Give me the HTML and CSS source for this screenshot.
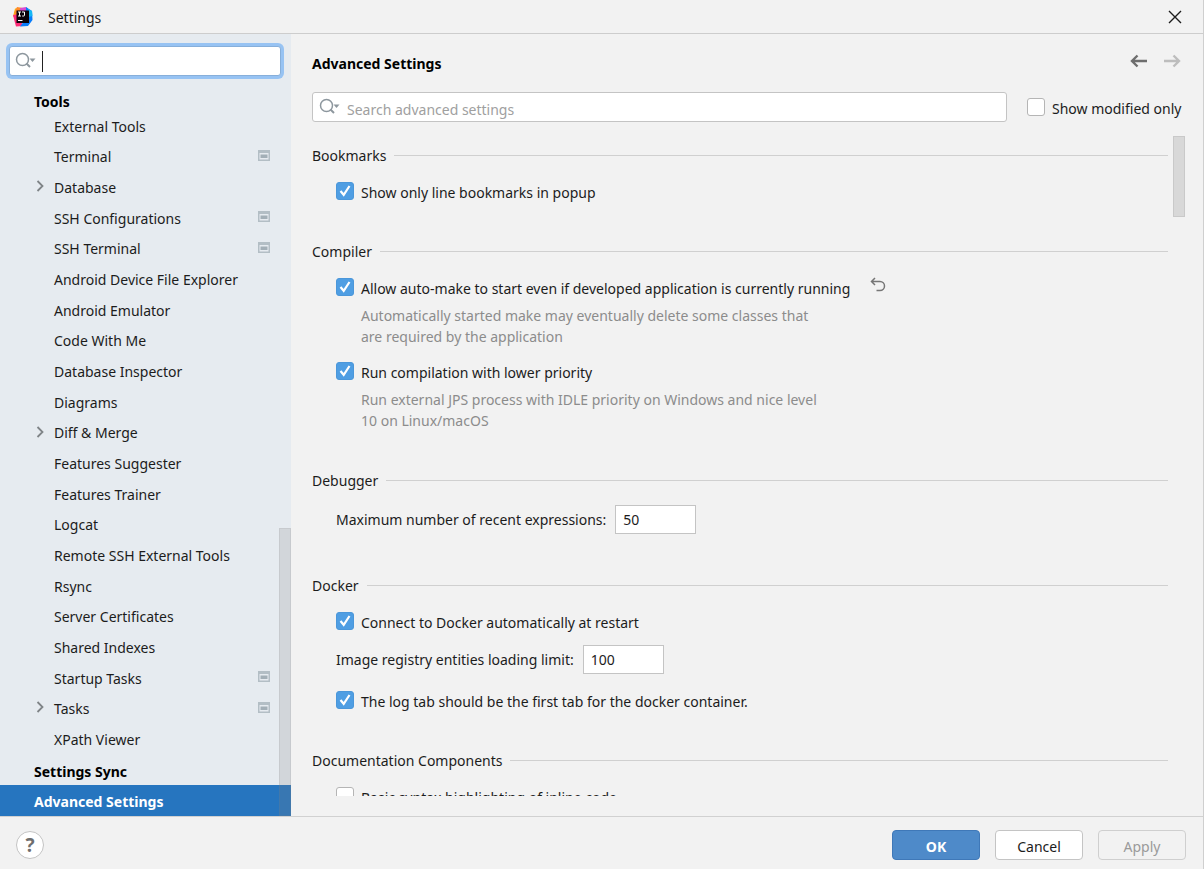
FILE: index.html
```html
<!DOCTYPE html>
<html lang="en">
<head>
<meta charset="utf-8">
<title>Settings</title>
<link rel="stylesheet" href="styles.css">
</head>
<body>
<svg class="defs" aria-hidden="true">
  <symbol id="i-search" viewBox="0 0 22 18">
    <circle cx="7.500" cy="7.500" r="6" fill="none" stroke="#8d979e" stroke-width="1.500"/>
    <path d="M11.500 11.500L15 15" fill="none" stroke="#8d979e" stroke-width="2"/>
    <path d="M14.500 6.500h6L17.500 10z" fill="#8d979e"/>
  </symbol>
  <symbol id="i-project" viewBox="0 0 12 11">
    <path d="M0 0h12v11H0zM1.500 3v6.500h9V3z" fill="#b3bec5" fill-rule="evenodd"/>
    <path d="M2.500 4.500h7v3.500h-7z" fill="#a3afb7"/>
  </symbol>
  <symbol id="i-chevron" viewBox="0 0 8 12">
    <path d="M1.500 1L6.500 6l-5 5" fill="none" stroke="#7f8487" stroke-width="1.800"/>
  </symbol>
</svg>

<header class="titlebar">
  <svg class="logo" viewBox="0 0 20 20" aria-hidden="true">
    <path d="M2 1.500L9 1 5 11 0 9.500z" fill="#fdb60d"/>
    <path d="M4 0l6 1-3 8-6-3z" fill="#ff8a2a"/>
    <path d="M0 8l5-1 5 12-7 .5L1.500 14z" fill="#fe2d78"/>
    <path d="M7 1l6-1 4 4-4 5-6-2z" fill="#d94bd0"/>
    <path d="M13 0l6 4 .5 9-4.500 6-8 .5 6-8z" fill="#087cfa"/>
    <path d="M15 2l4 2 .5 5-4 1z" fill="#14b8f5"/>
    <path d="M3.500 3.500h12.500v12.500H3.500z" fill="#0b0309"/>
    <path d="M5 5h3M6.500 5v4M5 9h3M9 5h2.500v3.200q0 .8-.8.800H9.200M5 13.500h4.500" fill="none" stroke="#fff" stroke-width="1"/>
  </svg>
  <span class="window-title">Settings</span>
  <button class="icon-btn" type="button" aria-label="Close">
    <svg width="14" height="14" viewBox="0 0 14 14"><path d="M1 1l12 12M13 1L1 13" stroke="#1c1c1c" stroke-width="1.400"/></svg>
  </button>
</header>

<div class="body">
  <aside class="sidebar">
    <div class="search focused">
      <svg class="search-icon" aria-hidden="true"><use href="#i-search"/></svg>
      <span class="caret"></span>
      <input type="text" aria-label="Search settings">
    </div>
    <div class="group">Tools</div>
    <ul class="tree">
      <li>External Tools</li>
      <li>Terminal<svg class="project"><use href="#i-project"/></svg></li>
      <li><svg class="chevron"><use href="#i-chevron"/></svg>Database</li>
      <li>SSH Configurations<svg class="project"><use href="#i-project"/></svg></li>
      <li>SSH Terminal<svg class="project"><use href="#i-project"/></svg></li>
      <li>Android Device File Explorer</li>
      <li>Android Emulator</li>
      <li>Code With Me</li>
      <li>Database Inspector</li>
      <li>Diagrams</li>
      <li><svg class="chevron"><use href="#i-chevron"/></svg>Diff &amp; Merge</li>
      <li>Features Suggester</li>
      <li>Features Trainer</li>
      <li>Logcat</li>
      <li>Remote SSH External Tools</li>
      <li>Rsync</li>
      <li>Server Certificates</li>
      <li>Shared Indexes</li>
      <li>Startup Tasks<svg class="project"><use href="#i-project"/></svg></li>
      <li><svg class="chevron"><use href="#i-chevron"/></svg>Tasks<svg class="project"><use href="#i-project"/></svg></li>
      <li>XPath Viewer</li>
      <li class="top">Settings Sync</li>
      <li class="top selected">Advanced Settings</li>
    </ul>
    <div class="thumb tree-thumb"></div>
  </aside>

  <main class="content">
    <div class="page-head">
      <h1>Advanced Settings</h1>
      <button class="icon-btn" type="button" aria-label="Back">
        <svg width="18" height="14" viewBox="0 0 18 14"><path d="M7.500 1.500L2 7l5.500 5.500M2 7h15" fill="none" stroke="#6e6e6e" stroke-width="2.400"/></svg>
      </button>
      <button class="icon-btn" type="button" aria-label="Forward" disabled>
        <svg width="18" height="14" viewBox="0 0 18 14"><path d="M10.500 1.500L16 7l-5.500 5.500M16 7H1" fill="none" stroke="#bdbdbd" stroke-width="2.400"/></svg>
      </button>
    </div>
    <div class="filter">
      <div class="search">
        <svg class="search-icon" aria-hidden="true"><use href="#i-search"/></svg>
        <input type="text" placeholder="Search advanced settings" aria-label="Search advanced settings">
      </div>
      <label class="check"><input type="checkbox">Show modified only</label>
    </div>

    <div class="scroll">
      <section>
        <h2>Bookmarks</h2>
        <div class="items">
          <label class="check"><input type="checkbox" checked>Show only line bookmarks in popup</label>
        </div>
      </section>
      <section>
        <h2>Compiler</h2>
        <div class="items">
          <div class="option">
            <div class="check-line">
              <label class="check"><input type="checkbox" checked>Allow auto-make to start even if developed application is currently running</label>
              <button class="icon-btn reset" type="button" aria-label="Reset">
                <svg width="16" height="16" viewBox="0 0 16 16"><path d="M5 1L1.500 4.500 5 8M1.500 4.500H10a4.500 4.500 0 0 1 0 9H6.500" fill="none" stroke="#767676" stroke-width="1.500"/></svg>
              </button>
            </div>
            <p class="help">Automatically started make may eventually delete some classes that<br>are required by the application</p>
          </div>
          <div class="option">
            <label class="check"><input type="checkbox" checked>Run compilation with lower priority</label>
            <p class="help">Run external JPS process with IDLE priority on Windows and nice level<br>10 on Linux/macOS</p>
          </div>
        </div>
      </section>
      <section>
        <h2>Debugger</h2>
        <div class="items">
          <div class="field"><label for="recent">Maximum number of recent expressions:</label><input id="recent" type="text" value="50"></div>
        </div>
      </section>
      <section>
        <h2>Docker</h2>
        <div class="items">
          <label class="check"><input type="checkbox" checked>Connect to Docker automatically at restart</label>
          <div class="field"><label for="limit">Image registry entities loading limit:</label><input id="limit" type="text" value="100"></div>
          <label class="check"><input type="checkbox" checked>The log tab should be the first tab for the docker container.</label>
        </div>
      </section>
      <section>
        <h2>Documentation Components</h2>
        <div class="items">
          <label class="check"><input type="checkbox">Basic syntax highlighting of inline code</label>
        </div>
      </section>
      <div class="thumb page-thumb"></div>
    </div>
  </main>
</div>

<footer class="footer">
  <button class="help-btn" type="button" aria-label="Help">?</button>
  <button class="btn primary" type="button">OK</button>
  <button class="btn" type="button">Cancel</button>
  <button class="btn" type="button" disabled>Apply</button>
</footer>
</body>
</html>
```

FILE: styles.css
```css
* { box-sizing: border-box; }

body {
  margin: 0;
  height: 100vh;
  display: flex;
  flex-direction: column;
  background: #f2f2f2;
  border-right: 1px solid #cfcfcf;
  color: #1c1c1c;
  font: 14px/22px "Noto Sans", "Open Sans", sans-serif;
}

button, input { font: inherit; color: inherit; }

.defs { display: none; }

.icon-btn {
  display: flex;
  padding: 0;
  border: 0;
  background: none;
}

/* Title bar */
.titlebar {
  display: flex;
  align-items: center;
  height: 34px;
  flex: none;
  padding: 0 21px 0 13px;
  border-bottom: 1px solid #cdcdcd;
}
.logo { width: 20px; height: 20px; }
.window-title { flex: 1; margin-left: 15px; padding-top: 3px; }

.body { flex: 1; min-height: 0; display: flex; }

/* Search fields */
.search {
  display: flex;
  align-items: center;
  height: 30px;
  padding-left: 6px;
  background: #fff;
  border: 1px solid #c4c4c4;
  border-radius: 3px;
}
.search-icon { width: 22px; height: 18px; flex: none; }
.search input {
  flex: 1;
  min-width: 0;
  height: 28px;
  padding: 4px 6px 0;
  border: 0;
  outline: 0;
  background: none;
}
.search input::placeholder { color: #a0a0a0; opacity: 1; }
.search.focused {
  margin: 0 10px 0 9px;
  border-color: #87afda;
  box-shadow: 0 0 0 3px #97c3f3;
  padding-left: 5px;
}
.caret { width: 1px; height: 21px; margin-left: 5px; background: #222; }

/* Settings tree */
.sidebar {
  position: relative;
  width: 291px;
  flex: none;
  display: flex;
  flex-direction: column;
  padding-top: 12px;
  background: #e6ebf0;
}
.group {
  padding: 15px 0 0 34px;
  height: 35px;
  font-weight: 700;
  color: #000;
}
.tree {
  flex: 1;
  display: grid;
  grid-auto-rows: 1fr;
  margin: 0;
  padding: 0;
  list-style: none;
}
.tree li {
  position: relative;
  display: flex;
  align-items: center;
  justify-content: space-between;
  padding: 1px 21px 0 54px;
}
.tree .top { padding-left: 34px; padding-top: 3px; font-weight: 700; color: #000; }
.tree .selected { background: #2675bf; color: #fff; }
.chevron { position: absolute; left: 36px; top: 8px; width: 8px; height: 12px; }
.project { width: 12px; height: 11px; margin-bottom: 4px; }

.thumb { position: absolute; right: 0; width: 12px; background: #80808033; border: 1px solid #80808022; }
.tree-thumb { top: 494px; bottom: 0; }
.page-thumb { top: 0; height: 81px; background: #d8d8d8; border-color: #c9c9c9; }

/* Page */
.content {
  flex: 1;
  min-width: 0;
  display: flex;
  flex-direction: column;
  padding: 17px 18px 20px 21px;
}
.page-head { display: flex; align-items: center; gap: 15px; padding-right: 4px; height: 22px; }
.page-head .icon-btn { margin-bottom: 2px; }
h1 { flex: 1; margin: 0; padding-top: 3px; font-size: 14px; line-height: 22px; color: #000; }
.filter { display: flex; align-items: center; gap: 20px; margin-top: 19px; }
.filter .search { flex: 1; }

.check { display: flex; align-items: center; gap: 7px; height: 22px; }
.filter .check { width: 158px; margin-top: 4px; }
.check input {
  appearance: none;
  width: 18px;
  height: 18px;
  flex: none;
  margin: 0 0 5px;
  background: #fff;
  border: 1px solid #b5b5b5;
  border-radius: 3px;
}
.check input:checked {
  background: #4f9ee3 url("data:image/svg+xml,%3Csvg xmlns='http://www.w3.org/2000/svg' viewBox='0 0 16 16'%3E%3Cpath d='M3.500 8l3.200 3.800L12.500 3' fill='none' stroke='white' stroke-width='2.200'/%3E%3C/svg%3E") center / 16px 16px no-repeat;
  border-color: #4b97da;
}

.scroll {
  position: relative;
  flex: 1;
  min-height: 0;
  overflow: hidden;
  margin-top: 14px;
  padding: 9px 17px 0 0;
}
section { margin-bottom: 37px; }
h2 {
  display: flex;
  align-items: center;
  gap: 8px;
  margin: 0 0 13px;
  font-size: 14px;
  line-height: 22px;
  font-weight: 400;
}
h2::after { content: ""; flex: 1; height: 1px; margin-bottom: 2px; background: #d0d0d0; }
.items { display: flex; flex-direction: column; gap: 11px; padding-left: 24px; }
.items .check { margin-top: 2px; }
.check-line { display: flex; align-items: center; gap: 20px; }
.reset { margin-bottom: 6px; }
.help { margin: 5px 0 2px 25px; line-height: 21px; color: #8c8c8c; }
.field { display: flex; align-items: center; gap: 9px; margin-bottom: 4px; }
.field input {
  width: 81px;
  height: 29px;
  padding: 0 7px;
  background: #fff;
  border: 1px solid #c4c4c4;
  border-radius: 0;
}

/* Footer */
.footer {
  display: flex;
  align-items: center;
  gap: 15px;
  height: 53px;
  flex: none;
  padding: 4px 17px 0 16px;
  border-top: 1px solid #d1d1d1;
}
.btn {
  width: 88px;
  height: 30px;
  padding: 3px 0 0;
  background: #fff;
  border: 1px solid #c4c4c4;
  border-radius: 4px;
}
.btn.primary { background: #4e8ac9; border-color: #3f78b8; color: #fff; font-weight: 700; }
.btn:disabled { background: #f2f2f2; border-color: #cfcfcf; color: #9a9a9a; }
.help-btn {
  width: 28px;
  height: 28px;
  margin-right: auto;
  padding: 0;
  background: #fff;
  border: 1px solid #c4c4c4;
  border-radius: 50%;
  color: #6e6e6e;
  font-size: 19px;
  font-weight: 700;
}
```
